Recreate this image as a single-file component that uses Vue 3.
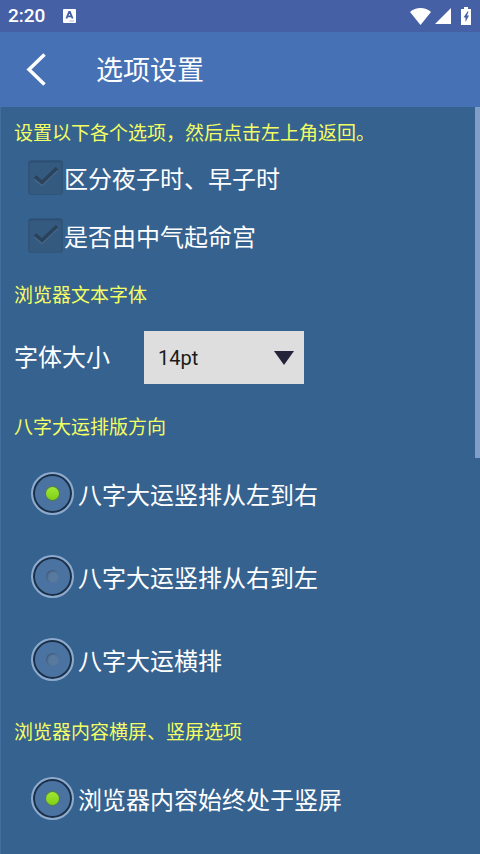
<template>
  <div class="settings-page">
    <div class="status-bar">
      <span class="clock">2:20</span>
      <svg class="app-badge" width="13" height="14" viewBox="0 0 13 14">
        <rect width="13" height="14" rx="1" fill="#fff" />
        <path
          d="M3.4 9.5 6.1 3h.8l2.7 6.5M4.5 7.3h4"
          fill="none"
          stroke="#4660a5"
          stroke-width="1.8"
        />
        <path d="M6.5 12h4.5" stroke="#a9b6d8" stroke-width="1" />
      </svg>
      <div class="status-icons">
        <svg class="wifi" width="21" height="17" viewBox="0 0 21 17">
          <path d="M10.5 17 0 4Q4.5 0 10.5 0T21 4Z" fill="#fff" />
        </svg>
        <svg class="signal" width="16" height="16" viewBox="0 0 16 16">
          <path d="M16 0v16H0Z" fill="#fff" />
        </svg>
        <svg class="battery" width="10" height="18" viewBox="0 0 10 18">
          <path d="M3 0h4v2h3v16H0V2h3Z" fill="#fff" />
          <path d="M6.5 4.5 2.5 10.5h2V15L8 8.5H6l1.5-4Z" fill="#4660a5" />
        </svg>
      </div>
    </div>

    <header class="header">
      <button class="btn-back" type="button" aria-label="返回">
        <svg width="20" height="33" viewBox="0 0 20 33">
          <path
            d="M18.5 1.5 3 16.5 18.5 31.5"
            fill="none"
            stroke="#fff"
            stroke-width="3.5"
          />
        </svg>
      </button>
      <h1>选项设置</h1>
    </header>

    <main class="content">
      <section class="section">
        <p class="hint">设置以下各个选项，然后点击左上角返回。</p>
        <label v-for="item in checks" :key="item.id" class="check-row">
          <span class="check-box">
            <input v-model="item.checked" type="checkbox" />
            <svg width="26" height="22" viewBox="0 0 26 22">
              <path
                d="M2 12.5 9 18.5 24 4"
                fill="none"
                stroke="#45688c"
                stroke-width="3"
              />
              <path
                d="M2 10.5 9 16.5 24 2"
                fill="none"
                :stroke="item.checked ? '#2a425a' : '#34587f'"
                stroke-width="3.5"
              />
            </svg>
          </span>
          <span>{{ item.label }}</span>
        </label>
      </section>

      <section class="section">
        <h2 class="hint">浏览器文本字体</h2>
        <div class="font-row">
          <label for="font-size">字体大小</label>
          <div class="select-wrap">
            <select id="font-size" v-model="fontSize">
              <option v-for="size in sizes" :key="size" :value="size">
                {{ size }}
              </option>
            </select>
            <svg class="arrow" width="20" height="14" viewBox="0 0 20 14">
              <path d="M0 0h20L10 14Z" fill="#25233a" />
            </svg>
          </div>
        </div>
      </section>

      <section class="section">
        <h2 class="hint">八字大运排版方向</h2>
        <div class="radio-group">
          <label v-for="item in directions" :key="item.value" class="radio-row">
            <input
              v-model="direction"
              type="radio"
              name="direction"
              :value="item.value"
            />
            <span>{{ item.label }}</span>
          </label>
        </div>
      </section>

      <section class="section">
        <h2 class="hint">浏览器内容横屏、竖屏选项</h2>
        <div class="radio-group">
          <label class="radio-row">
            <input
              v-model="orientation"
              type="radio"
              name="orientation"
              value="portrait"
            />
            <span>浏览器内容始终处于竖屏</span>
          </label>
        </div>
      </section>

      <div class="scroll-thumb"></div>
    </main>
  </div>
</template>

<script setup>
import { ref } from "vue";

const checks = ref([
  { id: "night", label: "区分夜子时、早子时", checked: true },
  { id: "palace", label: "是否由中气起命宫", checked: true },
]);

const sizes = ["12pt", "14pt", "16pt", "18pt"];
const fontSize = ref("14pt");

const directions = [
  { value: "ltr", label: "八字大运竖排从左到右" },
  { value: "rtl", label: "八字大运竖排从右到左" },
  { value: "row", label: "八字大运横排" },
];
const direction = ref("ltr");
const orientation = ref("portrait");
</script>

<style>
body {
  margin: 0;
  background: #36628f;
}
</style>

<style scoped>
.settings-page {
  display: flex;
  flex-direction: column;
  min-height: 100vh;
  background: #36628f;
  color: #fff;
  font-family: Roboto, "Noto Sans CJK SC", sans-serif;
  font-size: 24px;
}
.status-bar {
  display: flex;
  align-items: center;
  height: 32px;
  padding: 0 9px 0 8px;
  background: #4660a5;
}
.clock {
  font-size: 19px;
  line-height: 32px;
  font-weight: 500;
}
.app-badge {
  margin-left: 18px;
}
.status-icons {
  display: flex;
  align-items: center;
  gap: 4px;
  margin-left: auto;
}
.battery {
  margin-left: 6px;
}
.header {
  display: flex;
  align-items: center;
  height: 75px;
  background: #4671b5;
}
.btn-back {
  display: flex;
  align-items: center;
  justify-content: center;
  width: 72px;
  height: 75px;
  padding: 0;
  border: none;
  background: none;
  cursor: pointer;
}
.header h1 {
  margin: 0 0 0 24px;
  padding-top: 2px;
  font-size: 27px;
  line-height: 40px;
  font-weight: 400;
}
.content {
  position: relative;
  flex: 1;
  padding: 13px 14px 0;
  box-shadow: inset 1px 0 #416e9e;
}
.section {
  margin-bottom: 18px;
}
.section:last-of-type {
  margin-bottom: 0;
}
.hint {
  margin: 0;
  color: #f3ff62;
  font-size: 19px;
  line-height: 28px;
  font-weight: 400;
}
.check-row {
  display: flex;
  align-items: center;
  gap: 1px;
  height: 58px;
  padding-left: 14px;
  cursor: pointer;
}
.check-box {
  display: grid;
  place-items: center;
}
.check-box > * {
  grid-area: 1 / 1;
}
.check-box svg {
  pointer-events: none;
}
.check-box input {
  appearance: none;
  width: 35px;
  height: 35px;
  margin: 0;
  border: 1px solid #30557b;
  border-radius: 3px;
  background: #355a80;
  box-shadow: inset 0 1px 2px #2a4b6d;
}
.font-row {
  display: flex;
  align-items: center;
  gap: 34px;
  margin: 21px 0 30px;
}
.font-row label {
  padding-bottom: 4px;
}
.select-wrap {
  position: relative;
}
.select-wrap select {
  appearance: none;
  display: block;
  width: 160px;
  height: 53px;
  padding: 0 14px;
  border: none;
  border-radius: 0;
  background: #dedede;
  color: #1a1a1a;
  font-family: inherit;
  font-size: 20px;
}
.arrow {
  position: absolute;
  top: 20px;
  right: 10px;
  pointer-events: none;
}
.radio-group {
  padding: 10px 0 0 17px;
}
.radio-row {
  display: flex;
  align-items: center;
  gap: 4px;
  height: 83px;
  cursor: pointer;
}
.radio-row input {
  appearance: none;
  display: grid;
  place-items: center;
  flex: none;
  box-sizing: border-box;
  width: 43px;
  height: 43px;
  margin: 0;
  border: 2px solid #8eaacc;
  border-radius: 50%;
  background: #4b73a1;
  box-shadow: inset 0 0 0 2px #1b3048;
}
.radio-row input::before {
  content: "";
  width: 13px;
  height: 13px;
  border-radius: 50%;
  background: #587a9f;
  box-shadow: inset 1px 1px 2px #3b5878;
}
.radio-row input:checked::before {
  background: linear-gradient(#a0e832, #7fd016);
  box-shadow: 0 0 0 1px #55803f;
}
.scroll-thumb {
  position: absolute;
  top: 0;
  right: 0;
  width: 5px;
  height: 47%;
  background: #7f9fc8;
}
</style>
